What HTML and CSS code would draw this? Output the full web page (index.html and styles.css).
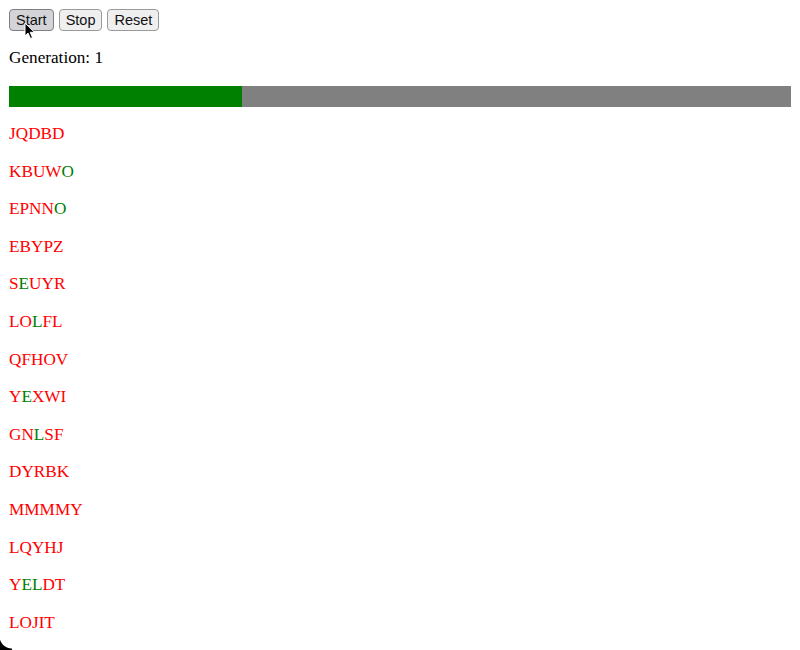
FILE: index.html
```html
<!DOCTYPE html>
<html>
  <head>
    <meta charset="UTF-8" />
    <meta name="viewport" content="width=device-width, initial-scale=1.0" />
    <title>Genetic Words</title>
    <link rel="stylesheet" href="styles.css">
  </head>
  <body>
    <div class="controls">
      <button class="pressed">Start</button>
      <button>Stop</button>
      <button>Reset</button>
      <!-- mouse pointer over Start -->
      <svg class="cursor" width="12" height="18" viewBox="0 0 12 18">
        <path d="M1 1 L1 14 L4 11 L6.5 16.5 L8.5 15.6 L6.2 10.3 L10.5 10.3 Z" fill="#000" stroke="#fff" stroke-width="1" stroke-linejoin="round" />
      </svg>
    </div>
    <p class="generation">Generation: <span id="gen">1</span></p>
    <div class="progress">
      <div class="fill"></div>
    </div>
    <div id="words"></div>
    <div class="corner"></div>
    <script>
      // letters that already match the target are drawn green
      var words = [
        ["JQDBD", []],
        ["KBUWO", [4]],
        ["EPNNO", [4]],
        ["EBYPZ", []],
        ["SEUYR", [1]],
        ["LOLFL", [2]],
        ["QFHOV", []],
        ["YEXWI", [1]],
        ["GNLSF", [2]],
        ["DYRBK", []],
        ["MMMMY", []],
        ["LQYHJ", []],
        ["YELDT", [1, 2]],
        ["LOJIT", []]
      ];

      var list = document.getElementById("words");
      words.forEach(function (w) {
        var p = document.createElement("p");
        p.className = "word";
        for (var i = 0; i < w[0].length; i++) {
          var s = document.createElement("span");
          s.textContent = w[0][i];
          s.className = w[1].indexOf(i) >= 0 ? "hit" : "miss";
          p.appendChild(s);
        }
        list.appendChild(p);
      });
    </script>
  </body>
</html>
```

FILE: styles.css
```css
html {
  overflow: hidden;
}
body {
  margin: 9px;
  font-family: "Liberation Serif", serif;
  font-size: 17.2px;
  color: #000;
  background-color: #fff;
}
.controls {
  position: relative;
  display: flex;
  gap: 5px;
  height: 22px;
}
button {
  font-family: "Liberation Sans", Arial, sans-serif;
  font-size: 14.5px;
  height: 22px;
  padding: 0 6px;
  background-color: #efeff0;
  color: #111;
  border: 1px solid #9a9a9a;
  border-radius: 4px;
  cursor: pointer;
}
button.pressed {
  background-color: #d4d4d8;
  border-color: #7e7e7e;
}
.cursor {
  position: absolute;
  left: 15px;
  top: 13px;
}
.generation {
  margin: 17px 0 18px;
  line-height: 20px;
}
.progress {
  height: 21px;
  background-color: #808080;
}
.fill {
  width: 29.8%;
  height: 100%;
  background-color: #008000;
}
.word {
  margin: 17.6px 0;
  line-height: 20px;
}
#words .word:first-child {
  margin-top: 17px;
}
.miss {
  color: #ff0000;
}
.hit {
  color: #008000;
}
.corner {
  position: fixed;
  left: 0;
  bottom: 0;
  width: 12px;
  height: 14px;
  background: radial-gradient(circle at 100% 0, transparent 12px, #000 13px);
}
```
